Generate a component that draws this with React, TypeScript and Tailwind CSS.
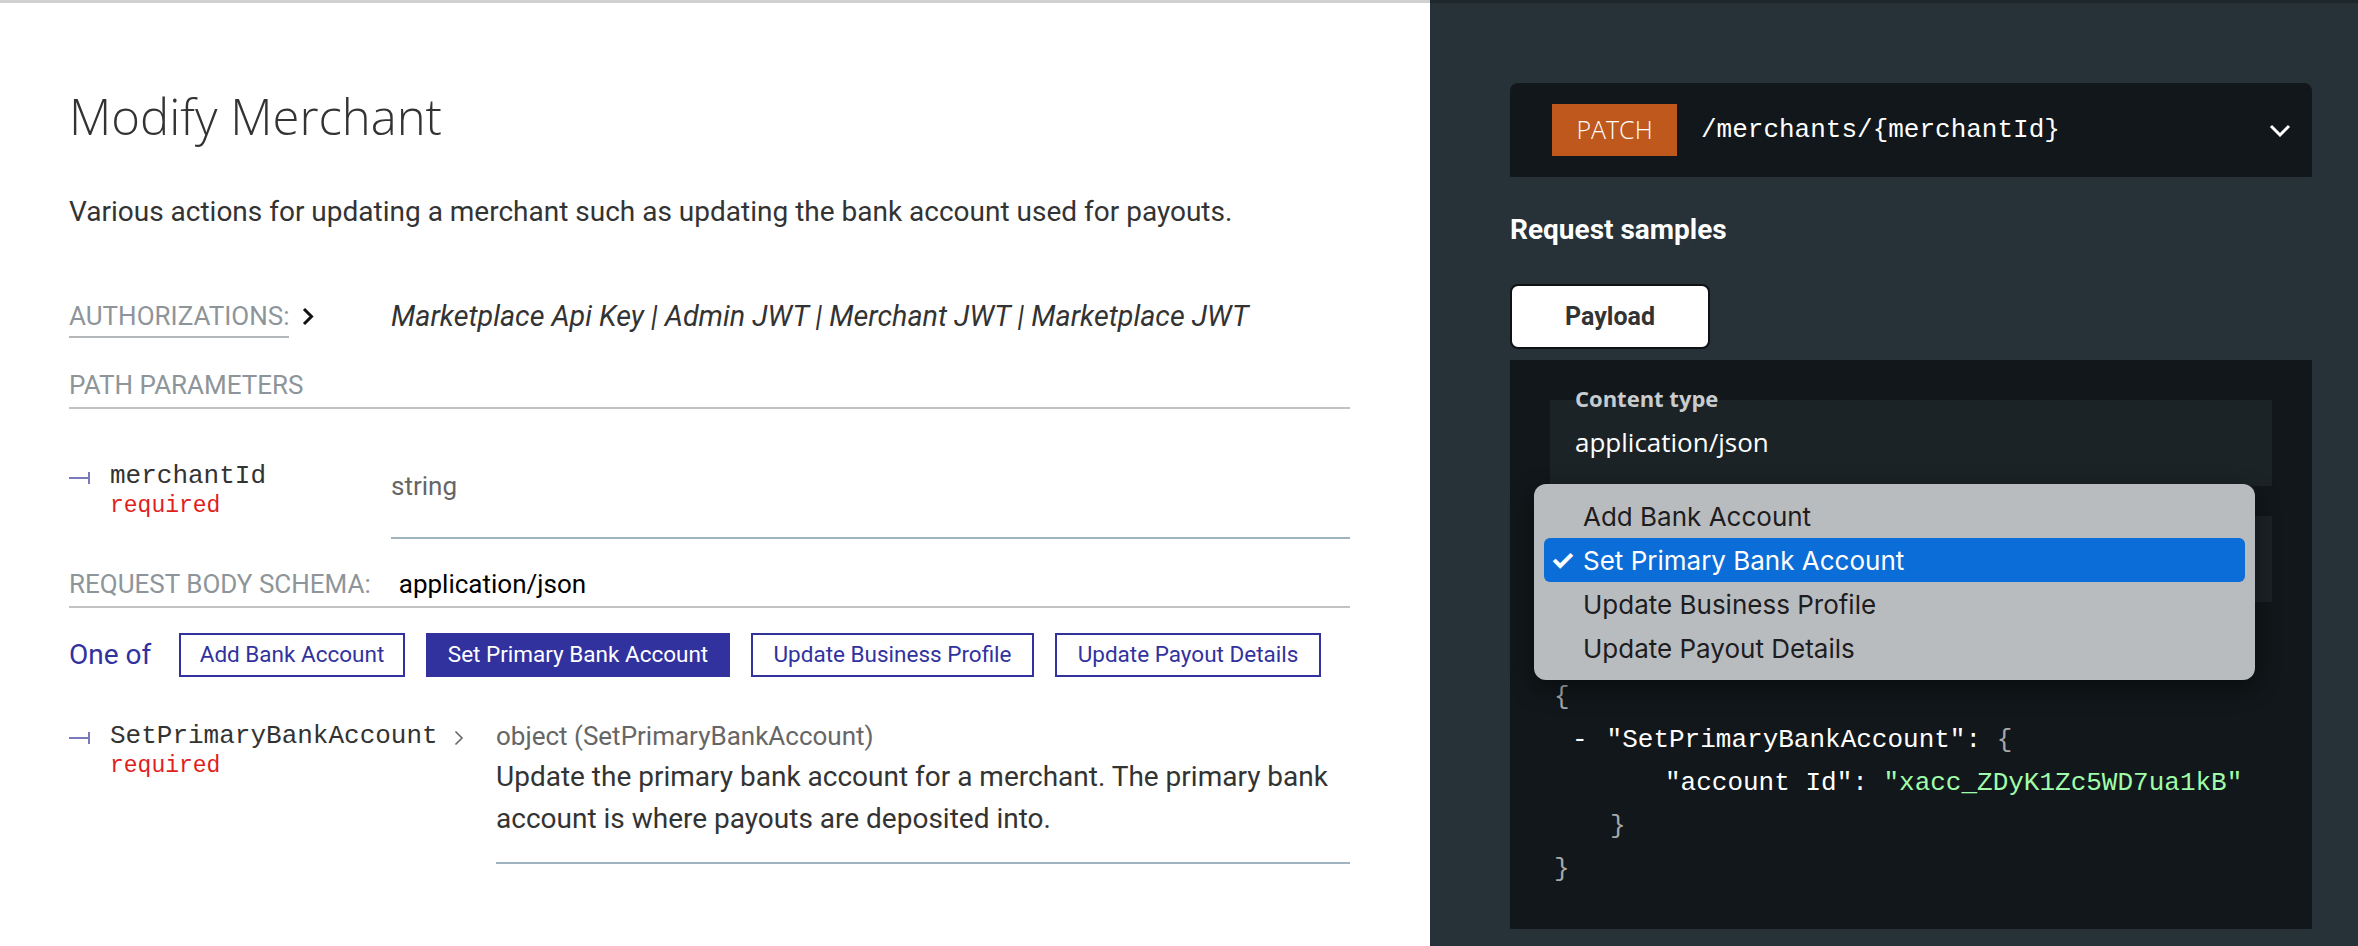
import React from "react";

const tabs = ["Add Bank Account", "Set Primary Bank Account", "Update Business Profile", "Update Payout Details"];
const tabWidths = ["w-[226px]", "w-[304px]", "w-[283px]", "w-[266px]"];

function TreeTick() {
  return (
    <svg width="22" height="14" viewBox="0 0 22 14" className="mt-[10px] shrink-0">
      <path d="M0 7H20M20 1V13" stroke="#7b7bba" strokeWidth="2" fill="none" />
    </svg>
  );
}

function Chevron({ className, color, width }: { className?: string; color: string; width: number }) {
  return (
    <svg width="12" height="19" viewBox="0 0 12 19" className={className}>
      <path d="M2 2l7.5 7.5L2 17" stroke={color} strokeWidth={width} fill="none" />
    </svg>
  );
}

export default function App() {
  return (
    <div className="flex h-[946px] w-full overflow-hidden">
      {/* left: operation docs */}
      <div className="w-[1430px] shrink-0 border-t-[3px] border-[#d0d0d0] bg-white pl-[69px] pr-[80px] font-['Roboto',sans-serif] text-[#333]">
        <h1 className="mt-[85px] font-['Open_Sans',sans-serif] text-[49px] font-light leading-[56px] text-[#333]">
          Modify Merchant
        </h1>
        <p className="mt-[47px] text-[28px] leading-[42px]">
          Various actions for updating a merchant such as updating the bank account used for payouts.
        </p>

        <div className="mt-[68px] flex items-start">
          <div className="flex w-[322px] items-start">
            <span className="border-b-2 border-[#b3b7ba] pb-[5px] text-[26px] leading-[30px] text-[#8e959a]">
              AUTHORIZATIONS:
            </span>
            <Chevron className="ml-[13px] mt-[6px]" color="#111" width={3} />
          </div>
          <span className="text-[28.7px] italic leading-[30px]">
            Marketplace Api Key | Admin JWT | Merchant JWT | Marketplace JWT
          </span>
        </div>

        <div className="mt-[32px] border-b-2 border-[#c0c3c6] pb-[7px] text-[26px] leading-[30px] text-[#8e959a]">
          PATH PARAMETERS
        </div>

        <div className="mt-[52px] flex">
          <div className="flex w-[322px] shrink-0">
            <TreeTick />
            <div className="ml-[19px] font-['Liberation_Mono',monospace]">
              <div className="text-[26px] leading-[30px]">merchantId</div>
              <div className="text-[23px] leading-[30px] text-[#e01e1e]">required</div>
            </div>
          </div>
          <div className="flex-1 border-b-2 border-[#9fb4be] pb-[36px] pt-[10px] text-[26px] leading-[30px] text-[#666]">
            string
          </div>
        </div>

        <div className="mt-[30px] flex items-baseline border-b-2 border-[#c2c2c2] pb-[7px] text-[26px] leading-[30px]">
          <span className="text-[#8e959a]">REQUEST BODY SCHEMA:</span>
          <span className="ml-[28px] text-black">application/json</span>
        </div>

        <div className="mt-[25px] flex items-center">
          <span className="w-[110px] shrink-0 text-[28px] text-[#32329f]">One of</span>
          <div className="flex shrink-0 gap-[21px]">
            {tabs.map((t, i) => (
              <button
                key={t}
                type="button"
                className={
                  tabWidths[i] +
                  (i === 1
                    ? " h-[44px] shrink-0 whitespace-nowrap border-2 border-[#32329f] bg-[#32329f] text-[22.5px] text-white"
                    : " h-[44px] shrink-0 whitespace-nowrap border-2 border-[#32329f] bg-white text-[22.5px] text-[#32329f]")
                }
              >
                {t}
              </button>
            ))}
          </div>
        </div>

        <div className="mt-[44px] flex">
          <div className="flex w-[427px] shrink-0 items-start">
            <TreeTick />
            <div className="ml-[19px] font-['Liberation_Mono',monospace]">
              <div className="text-[26px] leading-[30px]">SetPrimaryBankAccount</div>
              <div className="text-[23px] leading-[30px] text-[#e01e1e]">required</div>
            </div>
            <svg width="10" height="16" viewBox="0 0 10 16" className="ml-[16px] mt-[9px]">
              <path d="M1.5 1.5l6.5 6.5-6.5 6.5" stroke="#666" strokeWidth="1.6" fill="none" />
            </svg>
          </div>
          <div className="flex-1 border-b-2 border-[#9fb4be] pb-[22px]">
            <div className="text-[26px] leading-[30px] text-[#666]">object (SetPrimaryBankAccount)</div>
            <p className="mt-[5px] text-[28px] leading-[42px]">
              Update the primary bank account for a merchant. The primary bank account is where payouts are
              deposited into.
            </p>
          </div>
        </div>
      </div>

      {/* right: samples */}
      <div className="flex-1 border-t-[3px] border-[#1d262b] bg-[#263238] pl-[80px] pr-[46px] font-['Roboto',sans-serif]">
        <div className="mt-[80px] flex h-[94px] items-center rounded-t-[8px] bg-[#11171a] pl-[42px] pr-[21px]">
          <span className="flex h-[52px] w-[125px] items-center justify-center bg-[#bf581d] font-['Open_Sans',sans-serif] text-[25px] font-light text-white">
            PATCH
          </span>
          <span className="ml-[24px] font-['Liberation_Mono',monospace] text-[26px] text-white">
            /merchants/{"{merchantId}"}
          </span>
          <svg width="22" height="13" viewBox="0 0 22 13" className="ml-auto">
            <path d="M2 2l9 9 9-9" stroke="#fff" strokeWidth="3" fill="none" />
          </svg>
        </div>

        <h3 className="mt-[36px] text-[28px] font-bold leading-[34px] text-white">Request samples</h3>

        <div className="mt-[37px] flex h-[65px] w-[200px] items-center justify-center rounded-[8px] border-2 border-[#0e1214] bg-white text-[25px] font-bold text-[#333]">
          Payload
        </div>

        <div className="relative mt-[11px] h-[569px] bg-[#11171a] px-[40px] pt-[40px]">
          <div className="relative h-[86px] bg-[#1b2327] pl-[25px] pt-[27px]">
            <span className="absolute -top-[15px] left-[25px] font-['Open_Sans',sans-serif] text-[22px] font-bold leading-[26px] text-[#c9cccf]">
              Content type
            </span>
            <div className="font-['Open_Sans',sans-serif] text-[26px] leading-[30px] text-white">application/json</div>
          </div>
          <div className="mt-[30px] h-[86px] bg-[#1b2327]" />

          <div className="mt-[74px] pl-[4px] font-['Liberation_Mono',monospace] text-[26px] leading-[43px] text-white">
            <div className="text-[#a6a9ab]">{"{"}</div>
            <div className="pl-[18px]">
              <span>-</span>
              <span className="ml-[19px]">"SetPrimaryBankAccount": </span>
              <span className="text-[#a6a9ab]">{"{"}</span>
            </div>
            <div className="pl-[111px]">
              "account Id": <span className="text-[#a0fbaa]">"xacc_ZDyK1Zc5WD7ua1kB"</span>
            </div>
            <div className="pl-[56px] text-[#a6a9ab]">{"}"}</div>
            <div className="text-[#a6a9ab]">{"}"}</div>
          </div>

          {/* native select popup, open */}
          <div className="absolute left-[24px] top-[124px] w-[721px] rounded-[12px] bg-[#b8bcbf] p-[10px] font-['Inter',sans-serif] text-[26px] text-[#1d1d1f] shadow-[0_8px_24px_rgba(0,0,0,0.45)]">
            {tabs.map((t, i) => (
              <div
                key={t}
                className={
                  i === 1
                    ? "relative flex h-[44px] items-center rounded-[6px] bg-[#0b6dd7] pl-[39px] text-white"
                    : "flex h-[44px] items-center pl-[39px]"
                }
              >
                {i === 1 && <span className="absolute left-[6px] text-[28px] font-bold">✓</span>}
                {t}
              </div>
            ))}
          </div>
        </div>
      </div>
    </div>
  );
}
